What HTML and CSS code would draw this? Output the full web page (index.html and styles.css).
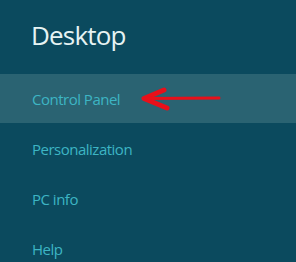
FILE: index.html
```html
<!doctype html>
<html lang="en">
<head>
    <meta charset="utf-8">
    <title>Desktop</title>
    <link rel="stylesheet" href="styles.css">
</head>
<body>
<div class="charm">
    <h1 class="charm-title">Desktop</h1>
    <ul class="charm-menu">
        <li class="charm-item active">
            <span>Control Panel</span>
            <!-- piros nyil -->
            <svg class="arrow" width="82" height="24" viewBox="0 0 82 24">
                <path d="M24 3 L4 11.5 L27 21" fill="none" stroke="#e8101a" stroke-width="5" stroke-linecap="round" stroke-linejoin="round"/>
                <path d="M5 11.5 L79 11" fill="none" stroke="#e8101a" stroke-width="3" stroke-linecap="round"/>
            </svg>
        </li>
        <li class="charm-item"><span>Personalization</span></li>
        <li class="charm-item"><span>PC info</span></li>
        <li class="charm-item"><span>Help</span></li>
    </ul>
</div>
</body>
</html>
```
FILE: styles.css
```css
body {
    margin: 0;
    background-color: #0b4a5e;
    font-family: "Open Sans", "Noto Sans", sans-serif;
}

.charm {
    width: 296px;
    height: 262px;
    overflow: hidden;
}

.charm-title {
    margin: 0;
    height: 74px;
    padding-left: 31px;
    box-sizing: border-box;
    padding-top: 17px;
    font-size: 26px;
    font-weight: normal;
    line-height: 36px;
    letter-spacing: -0.8px;
    color: #e6f3f3;
}

.charm-menu {
    list-style: none;
    margin: 0;
    padding: 0;
}

.charm-item {
    display: flex;
    align-items: center;
    gap: 20px;
    height: 50px;
    padding-left: 32px;
    font-size: 15px;
    letter-spacing: -0.5px;
    color: #3db5c4;
}

.active {
    background-color: #2a6372;
    height: 49px;
    margin-bottom: 1px;
}

.arrow {
    display: block;
}
```
